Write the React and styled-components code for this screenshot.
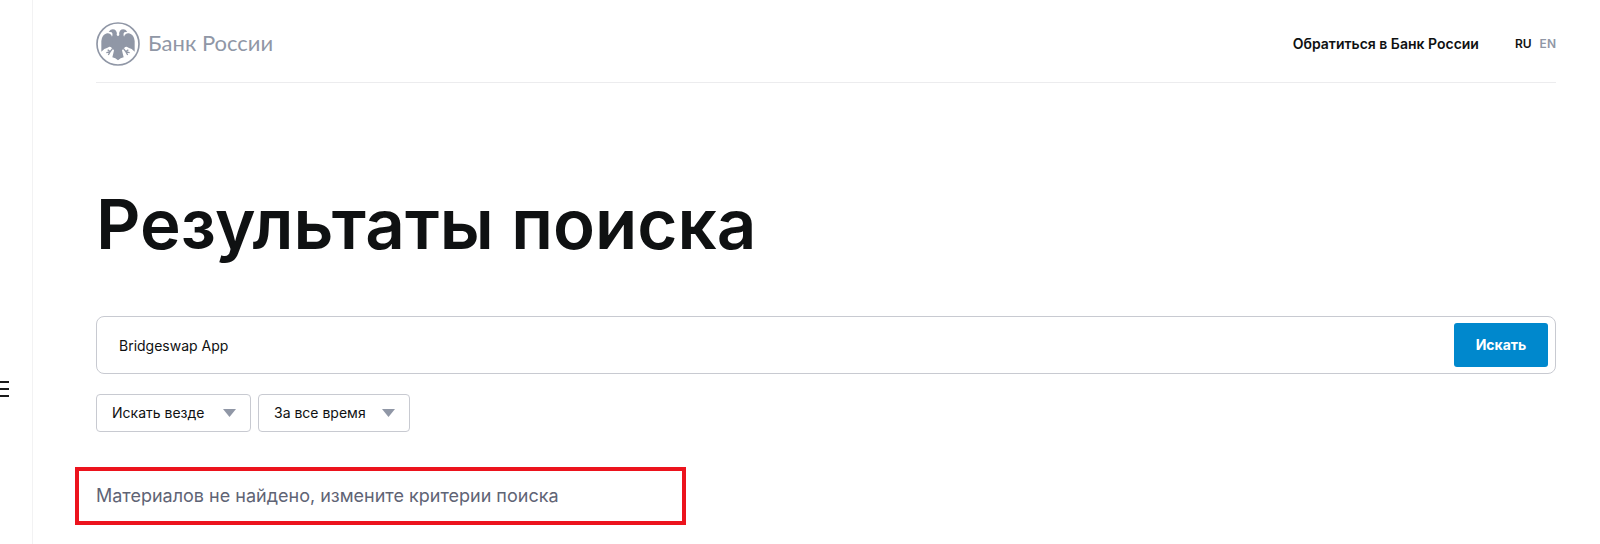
import React, { useState } from "react";
import styled, { createGlobalStyle } from "styled-components";

const GlobalStyle = createGlobalStyle`
  *, *::before, *::after { box-sizing: border-box; }
  body {
    margin: 0;
    background: #fff;
    color: #0f1112;
    font-family: Inter, "Liberation Sans", sans-serif;
  }
`;

const Page = styled.div`
  display: flex;
  min-height: 100vh;
`;

const Rail = styled.aside`
  display: flex;
  flex: none;
  align-items: flex-start;
  width: 33px;
  padding-top: 381px;
  border-right: 1px solid #f2f2f3;
`;

const MenuButton = styled.button`
  display: flex;
  flex-direction: column;
  gap: 5px;
  width: 9px;
  padding: 0;
  border: 0;
  background: none;
  cursor: pointer;
`;

const MenuLine = styled.span`
  height: 2px;
  background: #1a1a1a;
`;

const Main = styled.div`
  flex: 1;
  min-width: 0;
  padding: 0 44px 20px 63px;
`;

const Header = styled.header`
  display: flex;
  align-items: center;
  justify-content: space-between;
  height: 83px;
  padding-top: 5px;
  border-bottom: 1px solid #ececee;
`;

const Brand = styled.a`
  display: flex;
  align-items: center;
  gap: 8px;
  color: #9097a6;
  font-family: Lato, "Noto Sans", sans-serif;
  font-size: 22px;
  line-height: 28px;
  text-decoration: none;
`;

const BrandName = styled.span`
  padding-bottom: 2px;
`;

const HeaderNav = styled.nav`
  display: flex;
  align-items: center;
  gap: 36px;
`;

const ContactLink = styled.a`
  color: #0f1112;
  font-size: 14px;
  font-weight: 600;
  line-height: 20px;
  text-decoration: none;
`;

const Languages = styled.div`
  display: flex;
  gap: 8px;
`;

const LanguageLink = styled.a`
  color: ${({ $current }) => ($current ? "#0f1112" : "#9097a6")};
  font-size: 12px;
  font-weight: 600;
  line-height: 20px;
  text-decoration: none;
`;

const Title = styled.h1`
  margin: 101px 0 0;
  font-size: 69px;
  font-weight: 600;
  line-height: 80px;
`;

const SearchForm = styled.form`
  margin-top: 52px;
`;

const SearchBar = styled.div`
  display: flex;
  align-items: center;
  height: 58px;
  padding: 0 7px 0 0;
  border: 1px solid #c8cad1;
  border-radius: 8px;
`;

const SearchInput = styled.input`
  flex: 1;
  min-width: 0;
  height: 100%;
  padding: 0 22px;
  border: 0;
  outline: 0;
  background: transparent;
  color: #0f1112;
  font: 400 14px/20px Inter, sans-serif;
`;

const SearchButton = styled.button`
  width: 94px;
  height: 44px;
  padding: 0;
  border: 0;
  border-radius: 3px;
  background: #0088cd;
  color: #fff;
  font: 700 14px/20px Inter, sans-serif;
  cursor: pointer;
`;

const Filters = styled.div`
  display: flex;
  gap: 7px;
  margin-top: 20px;
`;

const SelectBox = styled.div`
  display: grid;
  grid-template-columns: 1fr 28px;
  align-items: center;
  width: ${({ $width }) => $width};
`;

const Select = styled.select`
  grid-area: 1 / 1 / 2 / 3;
  height: 38px;
  padding: 0 0 0 15px;
  appearance: none;
  border: 1px solid #c8cad1;
  border-radius: 4px;
  background: #fff;
  color: #0f1112;
  font: 400 14px/20px Inter, sans-serif;
`;

const Arrow = styled.svg`
  grid-area: 1 / 2;
  pointer-events: none;
`;

const Notice = styled.p`
  max-width: 611px;
  margin: 35px 0 0 -21px;
  padding: 15px 17px;
  border: 4px solid #ec131d;
  color: #5f6475;
  font-size: 18px;
  line-height: 20px;
`;

function Emblem() {
  return (
    <svg width="44" height="44" viewBox="18 18 132 132" aria-hidden="true">
      <circle cx="84" cy="84" r="63" fill="none" stroke="currentColor" strokeWidth="5" />
      <g fill="currentColor">
        <path d="M56 47 L62 41 Q72 38 78 44 Q82 50 80 57 L84 61 L88 57 Q86 50 90 44 Q96 38 106 41 L112 47 L103 49 Q99 53 101 60 L104 63 L106 92 L96 103 L98 112 L101 124 L92 127 L84 133 L76 127 L67 124 L70 112 L72 103 L62 92 L64 63 L67 60 Q69 53 65 49 Z" />
        <path d="M66 63 Q63 51 51 52 Q36 56 34 75 L34 107 L43 99 L51 96 L58 92 L68 94 Z" />
        <path d="M102 63 Q105 51 117 52 Q132 56 134 75 L134 107 L125 99 L117 96 L110 92 L100 94 Z" />
      </g>
      <g fill="none" stroke="currentColor" strokeWidth="4">
        <path d="M68 97 L60 108 L49 110 M60 108 L55 117 M61 107 L53 101" />
        <path d="M100 97 L108 108 L119 110 M108 108 L113 117 M107 107 L115 101" />
      </g>
    </svg>
  );
}

function FilterSelect({ label, options, width }) {
  return (
    <SelectBox $width={width}>
      <Select aria-label={label}>
        {options.map((option) => (
          <option key={option}>{option}</option>
        ))}
      </Select>
      <Arrow width="13" height="8" viewBox="0 0 13 8" aria-hidden="true">
        <path d="M0 0H13L6.5 8Z" fill="#9097a6" />
      </Arrow>
    </SelectBox>
  );
}

export default function App() {
  const [query, setQuery] = useState("Bridgeswap App");

  return (
    <>
      <GlobalStyle />
      <Page>
        <Rail>
          <MenuButton type="button" aria-label="Меню">
            <MenuLine />
            <MenuLine />
            <MenuLine />
          </MenuButton>
        </Rail>
        <Main>
          <Header>
            <Brand href="#">
              <Emblem />
              <BrandName>Банк России</BrandName>
            </Brand>
            <HeaderNav>
              <ContactLink href="#">Обратиться в Банк России</ContactLink>
              <Languages>
                <LanguageLink href="#" $current>RU</LanguageLink>
                <LanguageLink href="#">EN</LanguageLink>
              </Languages>
            </HeaderNav>
          </Header>
          <main>
            <Title>Результаты поиска</Title>
            <SearchForm onSubmit={(event) => event.preventDefault()}>
              <SearchBar>
                <SearchInput
                  type="text"
                  aria-label="Поиск"
                  value={query}
                  onChange={(event) => setQuery(event.target.value)}
                />
                <SearchButton type="submit">Искать</SearchButton>
              </SearchBar>
              <Filters>
                <FilterSelect label="Раздел" options={["Искать везде"]} width="155px" />
                <FilterSelect label="Период" options={["За все время"]} width="152px" />
              </Filters>
            </SearchForm>
            <Notice>Материалов не найдено, измените критерии поиска</Notice>
          </main>
        </Main>
      </Page>
    </>
  );
}
